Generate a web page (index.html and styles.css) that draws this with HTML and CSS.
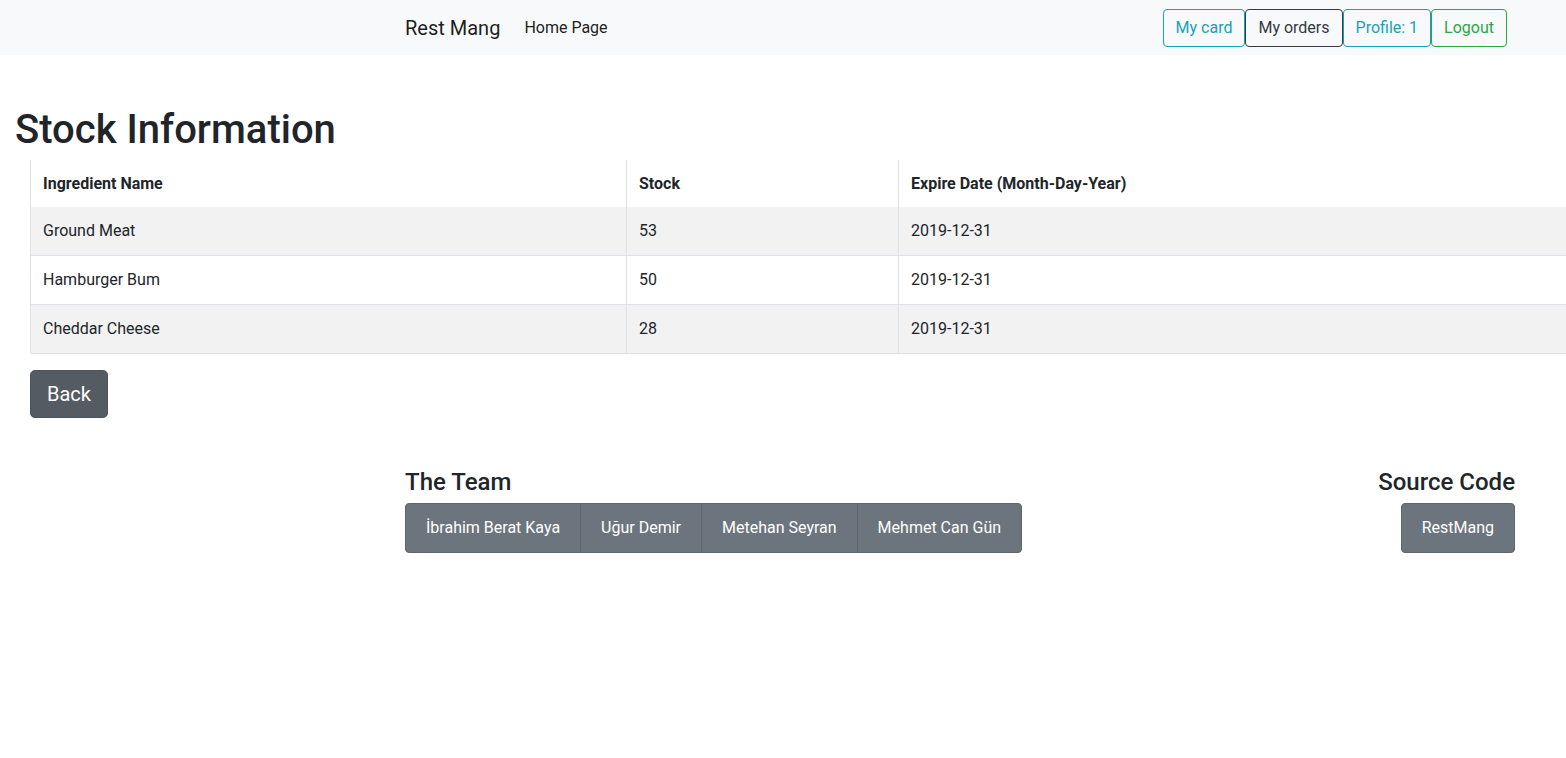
FILE: index.html
```html
<!DOCTYPE html>
<html lang="en">
<head>
<meta charset="utf-8">
<title>Rest Mang</title>
<link rel="stylesheet" href="styles.css">
</head>
<body>
<nav class="navbar">
  <div class="nav-inner">
    <a class="brand" href="#">Rest Mang</a>
    <a class="nav-link" href="#">Home Page</a>
    <div class="nav-actions">
      <a class="btn btn-outline-info" href="#">My card</a>
      <a class="btn btn-outline-dark" href="#">My orders</a>
      <a class="btn btn-outline-info" href="#">Profile: 1</a>
      <a class="btn btn-outline-success" href="#">Logout</a>
    </div>
  </div>
</nav>

<main class="content">
  <h1 class="page-title">Stock Information</h1>
  <table class="stock-table">
    <colgroup>
      <col class="col-name">
      <col class="col-stock">
      <col class="col-date">
    </colgroup>
    <thead>
      <tr>
        <th>Ingredient Name</th>
        <th>Stock</th>
        <th>Expire Date (Month-Day-Year)</th>
      </tr>
    </thead>
    <tbody>
      <tr class="striped">
        <td>Ground Meat</td>
        <td>53</td>
        <td>2019-12-31</td>
      </tr>
      <tr>
        <td>Hamburger Bum</td>
        <td>50</td>
        <td>2019-12-31</td>
      </tr>
      <tr class="striped">
        <td>Cheddar Cheese</td>
        <td>28</td>
        <td>2019-12-31</td>
      </tr>
    </tbody>
  </table>
  <a class="btn-back" href="#">Back</a>
</main>

<footer class="footer">
  <div class="footer-inner">
    <div class="team">
      <h4 class="footer-title">The Team</h4>
      <div class="btn-group">
        <a class="btn-gray" href="#">İbrahim Berat Kaya</a>
        <a class="btn-gray" href="#">Uğur Demir</a>
        <a class="btn-gray" href="#">Metehan Seyran</a>
        <a class="btn-gray" href="#">Mehmet Can Gün</a>
      </div>
    </div>
    <div class="source">
      <h4 class="footer-title">Source Code</h4>
      <div class="btn-group">
        <a class="btn-gray" href="#">RestMang</a>
      </div>
    </div>
  </div>
</footer>
</body>
</html>
```

FILE: styles.css
```css
* { box-sizing: border-box; }

html, body {
  margin: 0;
  padding: 0;
  overflow-x: hidden;
}

body {
  font-family: Roboto, "Helvetica Neue", Arial, sans-serif;
  font-size: 16px;
  line-height: 1.5;
  color: #212529;
  background: #fff;
}

a { text-decoration: none; }

/* Navbar */
.navbar {
  background: #f8f9fa;
  height: 55px;
}

.nav-inner {
  margin-left: 405px;
  width: 1102px;
  height: 100%;
  display: flex;
  align-items: center;
}

.brand {
  font-size: 20px;
  line-height: 30px;
  color: rgba(0, 0, 0, 0.9);
  margin-right: 16px;
}

.nav-link {
  padding: 8px;
  color: rgba(0, 0, 0, 0.9);
  font-size: 16px;
  line-height: 24px;
}

.nav-actions {
  margin-left: auto;
  display: flex;
}

.btn {
  display: inline-block;
  padding: 6px 12px;
  font-size: 16px;
  line-height: 24px;
  border: 1px solid;
  border-radius: 4px;
  background: transparent;
}

.btn-outline-info { color: #17a2b8; border-color: #17a2b8; }
.btn-outline-dark { color: #343a40; border-color: #343a40; }
.btn-outline-success { color: #28a745; border-color: #28a745; }

/* Main content */
.content {
  padding-top: 51px;
}

.page-title {
  margin: 0 0 6px 15px;
  font-size: 40px;
  font-weight: 500;
  line-height: 1.2;
}

.stock-table {
  margin-left: 30px;
  width: calc(100% - 30px);
  border-collapse: collapse;
  table-layout: fixed;
  margin-bottom: 16px;
}

.col-name { width: 596px; }
.col-stock { width: 272px; }

.stock-table th,
.stock-table td {
  padding: 12px;
  text-align: left;
  vertical-align: top;
  border-left: 1px solid #dee2e6;
  line-height: 24px;
  white-space: nowrap;
}

.stock-table th {
  font-weight: 700;
  padding-bottom: 11px;
}

.stock-table tbody td {
  border-bottom: 1px solid #dee2e6;
}

.stock-table tr.striped { background: #f2f2f2; }

.btn-back {
  display: inline-block;
  margin-left: 30px;
  padding: 8px 16px;
  font-size: 20px;
  line-height: 30px;
  color: #fff;
  background: #545b62;
  border: 1px solid #4e555b;
  border-radius: 4.8px;
}

/* Footer */
.footer {
  margin-top: 50px;
}

.footer-inner {
  margin-left: 405px;
  width: 1110px;
  display: flex;
  justify-content: space-between;
}

.source {
  display: flex;
  flex-direction: column;
  align-items: flex-end;
}

.footer-title {
  margin: 0 0 6px;
  font-size: 24px;
  font-weight: 500;
  line-height: 1.2;
}

.btn-group {
  display: inline-flex;
}

.btn-gray {
  display: inline-block;
  padding: 12px 20px;
  font-size: 16px;
  line-height: 24px;
  color: #fff;
  background: #6c757d;
  border: 1px solid #5f676e;
}

.btn-gray + .btn-gray { margin-left: -1px; }

.btn-gray:first-child { border-radius: 4px 0 0 4px; }
.btn-gray:last-child { border-radius: 0 4px 4px 0; }
.btn-gray:only-child { border-radius: 4px; }
```
